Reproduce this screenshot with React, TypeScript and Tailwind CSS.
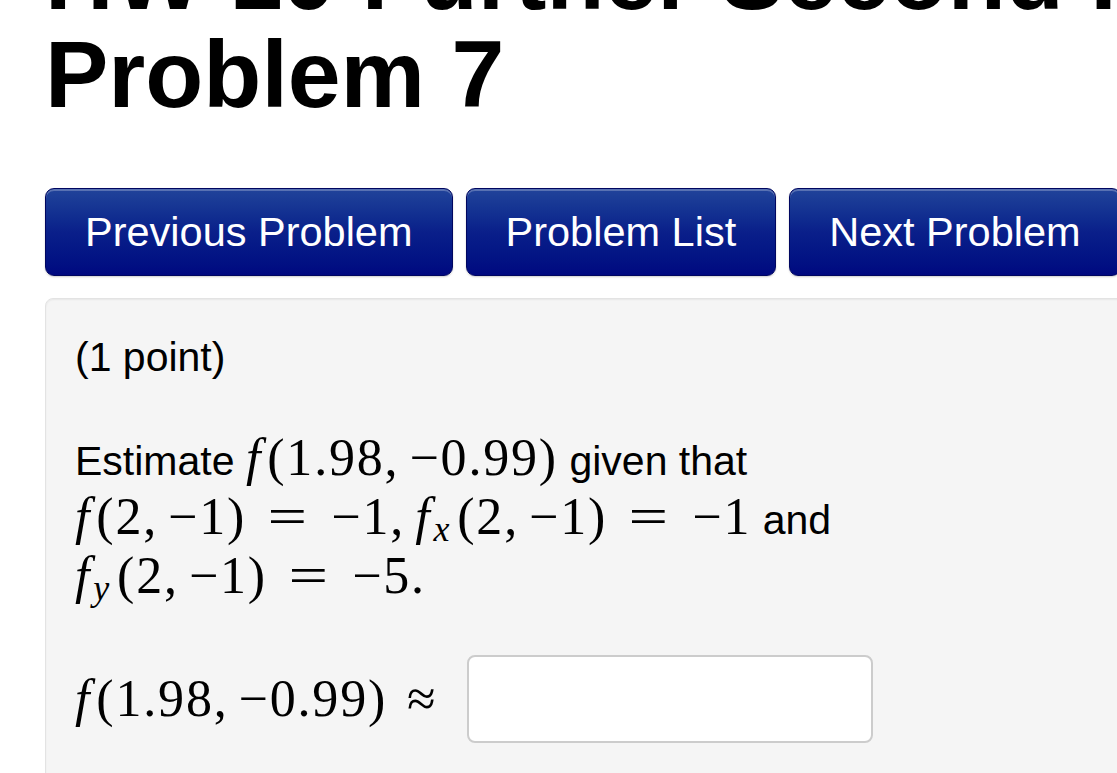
import type { ReactNode } from 'react';

const sans = "font-['Liberation_Sans','Helvetica_Neue',Arial,sans-serif]";
const serif = "font-['Liberation_Serif','Times_New_Roman',serif]";

// inline math pieces, rendered in a serif face a bit larger than body text
function M({ children }: { children: ReactNode }) {
  return (
    <span className={`${serif} text-[52px] tracking-[0.035em] leading-none whitespace-nowrap`}>{children}</span>
  );
}

// italic function name, with a little room before the bracket
function F() {
  return <span className="italic mr-[5px]">f</span>;
}

function Sub({ children }: { children: ReactNode }) {
  return (
    <sub className="italic text-[36px] leading-none relative top-[7px] -ml-[3px] mr-[6px] align-baseline">
      {children}
    </sub>
  );
}

// relation sign, widened so it reads like a math "="
function Rel({ children }: { children: ReactNode }) {
  return <span className="inline-block mx-[27px] scale-x-[1.35]">{children}</span>;
}

function Comma() {
  return <span className="mr-[10px]">,</span>;
}

function NavButton({ label }: { label: string }) {
  return (
    <button className="shrink-0 h-[88px] px-[39px] rounded-[9px] border border-[#000660] bg-gradient-to-b from-[#21439a] via-[#0a1f8a] to-[#000880] text-white text-[41.5px] shadow-[inset_0_2px_0_rgba(255,255,255,0.25),0_1px_2px_rgba(0,0,0,0.2)]">
      {label}
    </button>
  );
}

export default function App() {
  return (
    <div className={`${sans} h-[773px] w-[1117px] overflow-hidden bg-white text-black pl-[45px]`}>
      <div className="-mt-[73px] font-bold text-[95px] leading-[98px] whitespace-nowrap">
        <div>HW 10 Further Second Partials</div>
        <h1>Problem 7</h1>
      </div>

      <div className="mt-[65px] flex gap-[13px]">
        <NavButton label="Previous Problem" />
        <NavButton label="Problem List" />
        <NavButton label="Next Problem" />
      </div>

      <div className="mt-[22px] w-[1120px] h-[520px] rounded-tl-[8px] border border-[#e3e3e3] bg-[#f5f5f5] shadow-[inset_0_1px_2px_rgba(0,0,0,0.06)] pl-[29px] pt-[29px] text-[41px] leading-[59px]">
        <p>(1 point)</p>

        <p className="mt-[45px]">
          Estimate{' '}
          <M>
            <F />(1.98<Comma />−0.99)
          </M>{' '}
          given that
          <br />
          <M>
            <F />(2<Comma />−1)<Rel>=</Rel>−1<Comma />
            <F />
            <Sub>x</Sub>(2<Comma />−1)<Rel>=</Rel>−1
          </M>{' '}
          and
          <br />
          <M>
            <F />
            <Sub>y</Sub>(2<Comma />−1)<Rel>=</Rel>−5.
          </M>
        </p>

        <div className="mt-[46px] flex items-center gap-[30px]">
          <M>
            <F />(1.98<Comma />−0.99)<span className="ml-[20px]">≈</span>
          </M>
          <input
            type="text"
            className="h-[88px] w-[406px] rounded-[8px] border-2 border-[#cccccc] bg-white px-3 text-[41px] outline-none"
          />
        </div>
      </div>
    </div>
  );
}
